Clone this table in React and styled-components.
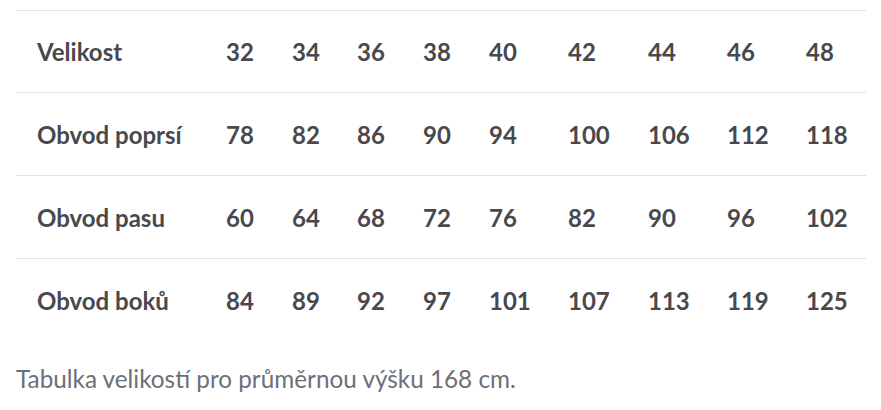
import styled, { createGlobalStyle } from "styled-components";

const GlobalStyle = createGlobalStyle`
  body {
    margin: 0;
    background: #fff;
    font-family: Lato, "Open Sans", sans-serif;
  }
`;

const Wrap = styled.div`
  padding: 10px 15px 0 16px;
`;

const Table = styled.table`
  width: 850px;
  border-collapse: collapse;
  table-layout: fixed;
  border-top: 1px solid #e2e2e2;
`;

const Row = styled.tr`
  height: ${(p) => (p.$first ? "82px" : "83px")};
  border-bottom: ${(p) => (p.$last ? "none" : "1px solid #e2e2e2")};
`;

const Cell = styled.td`
  padding: 0 0 0 21px;
  font-size: 24px;
  font-weight: 700;
  color: #48484d;
  text-align: left;
  white-space: nowrap;
`;

const Caption = styled.p`
  margin: 22px 0 0;
  font-size: 24.3px;
  color: #6d6f78;
`;

const widths = [189, 66, 65, 66, 66, 79, 80, 79, 79, 81];

const rows = [
  ["Velikost", 32, 34, 36, 38, 40, 42, 44, 46, 48],
  ["Obvod poprsí", 78, 82, 86, 90, 94, 100, 106, 112, 118],
  ["Obvod pasu", 60, 64, 68, 72, 76, 82, 90, 96, 102],
  ["Obvod boků", 84, 89, 92, 97, 101, 107, 113, 119, 125],
];

export default function App() {
  return (
    <>
      <GlobalStyle />
      <Wrap>
        <Table>
          <colgroup>
            {widths.map((w, i) => (
              <col key={i} style={{ width: w }} />
            ))}
          </colgroup>
          <tbody>
            {rows.map((r, i) => (
              <Row key={i} $first={i === 0} $last={i === rows.length - 1}>
                {r.map((c, j) => (
                  <Cell key={j}>{c}</Cell>
                ))}
              </Row>
            ))}
          </tbody>
        </Table>
        <Caption>Tabulka velikostí pro průměrnou výšku 168 cm.</Caption>
      </Wrap>
    </>
  );
}
